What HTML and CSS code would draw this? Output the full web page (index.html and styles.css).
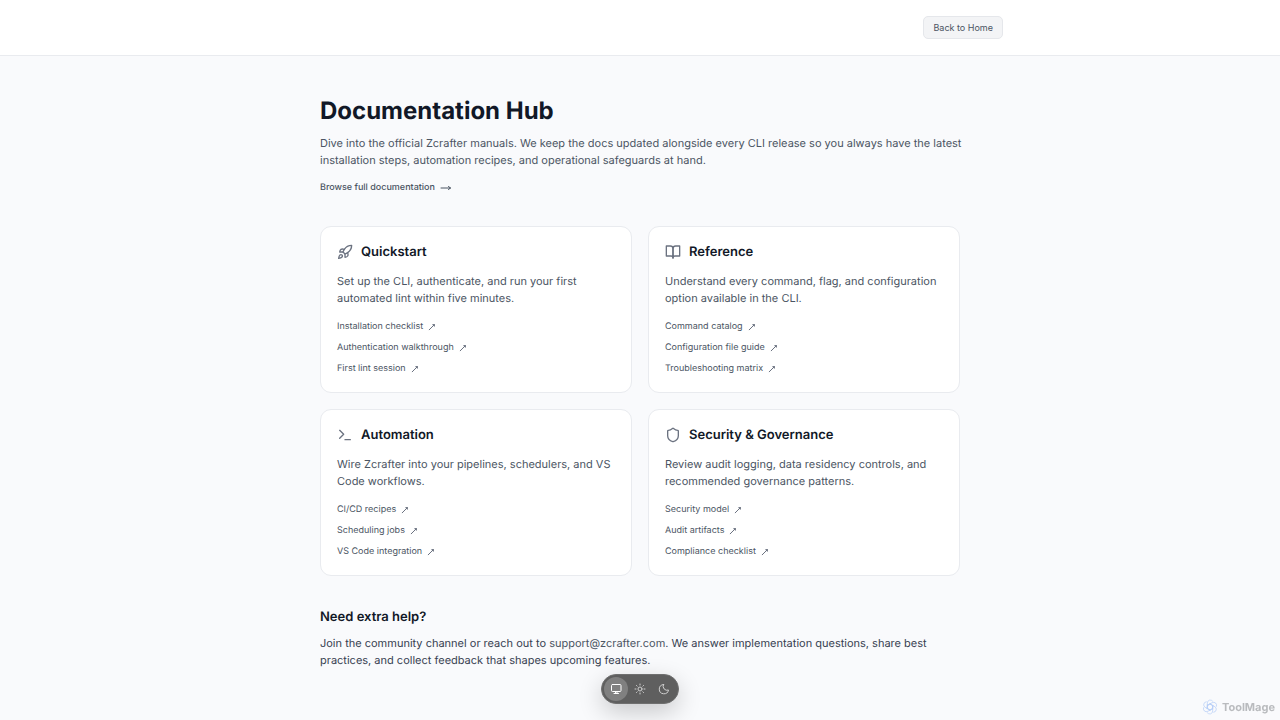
FILE: index.html
```html
<!DOCTYPE html>
<html lang="en">
<head>
  <meta charset="UTF-8" />
  <meta name="viewport" content="width=device-width, initial-scale=1.0" />
  <title>Documentation Hub</title>
  <link rel="stylesheet" href="styles.css">
</head>
<body>

  <header class="site-header">
    <div class="header-inner">
      <button type="button" class="back-button">Back to Home</button>
    </div>
  </header>

  <main class="container">
    <section class="intro">
      <h1>Documentation Hub</h1>
      <p>Dive into the official Zcrafter manuals. We keep the docs updated alongside every CLI release so you always have the latest installation steps, automation recipes, and operational safeguards at hand.</p>
      <a class="browse-link" href="#">Browse full documentation
        <svg class="arrow-right" viewBox="0 0 12 8"><path d="M1 4h9.500M8.500 2.500L10.500 4l-2 1.500" /></svg>
      </a>
    </section>

    <section class="cards">
      <article class="card">
        <h2>
          <svg class="icon" viewBox="0 0 24 24"><path d="M4.500 16.500c-1.500 1.260-2 5-2 5s3.740-.5 5-2c.71-.84.7-2.130-.09-2.910a2.180 2.180 0 0 0-2.910-.09z" /><path d="m12 15-3-3a22 22 0 0 1 2-3.950A12.880 12.880 0 0 1 22 2c0 2.720-.78 7.500-6 11a22.350 22.350 0 0 1-4 2z" /><path d="M9 12H4s.55-3.030 2-4c1.620-1.080 5 0 5 0" /><path d="M12 15v5s3.030-.55 4-2c1.080-1.620 0-5 0-5" /></svg>
          Quickstart
        </h2>
        <p>Set up the CLI, authenticate, and run your first automated lint within five minutes.</p>
        <ul>
          <li><a href="#">Installation checklist <svg class="arrow-out" viewBox="0 0 8 8"><path d="M1.200 6.800L6.400 1.600M4.800 1.600h1.600v1.600" /></svg></a></li>
          <li><a href="#">Authentication walkthrough <svg class="arrow-out" viewBox="0 0 8 8"><path d="M1.200 6.800L6.400 1.600M4.800 1.600h1.600v1.600" /></svg></a></li>
          <li><a href="#">First lint session <svg class="arrow-out" viewBox="0 0 8 8"><path d="M1.200 6.800L6.400 1.600M4.800 1.600h1.600v1.600" /></svg></a></li>
        </ul>
      </article>

      <article class="card">
        <h2>
          <svg class="icon" viewBox="0 0 24 24"><path d="M2 3h6a4 4 0 0 1 4 4v14a3 3 0 0 0-3-3H2z" /><path d="M22 3h-6a4 4 0 0 0-4 4v14a3 3 0 0 1 3-3h7z" /></svg>
          Reference
        </h2>
        <p>Understand every command, flag, and configuration option available in the CLI.</p>
        <ul>
          <li><a href="#">Command catalog <svg class="arrow-out" viewBox="0 0 8 8"><path d="M1.200 6.800L6.400 1.600M4.800 1.600h1.600v1.600" /></svg></a></li>
          <li><a href="#">Configuration file guide <svg class="arrow-out" viewBox="0 0 8 8"><path d="M1.200 6.800L6.400 1.600M4.800 1.600h1.600v1.600" /></svg></a></li>
          <li><a href="#">Troubleshooting matrix <svg class="arrow-out" viewBox="0 0 8 8"><path d="M1.200 6.800L6.400 1.600M4.800 1.600h1.600v1.600" /></svg></a></li>
        </ul>
      </article>

      <article class="card">
        <h2>
          <svg class="icon" viewBox="0 0 24 24"><path d="m4 17 6-6-6-6" /><path d="M12 19h8" /></svg>
          Automation
        </h2>
        <p>Wire Zcrafter into your pipelines, schedulers, and VS Code workflows.</p>
        <ul>
          <li><a href="#">CI/CD recipes <svg class="arrow-out" viewBox="0 0 8 8"><path d="M1.200 6.800L6.400 1.600M4.800 1.600h1.600v1.600" /></svg></a></li>
          <li><a href="#">Scheduling jobs <svg class="arrow-out" viewBox="0 0 8 8"><path d="M1.200 6.800L6.400 1.600M4.800 1.600h1.600v1.600" /></svg></a></li>
          <li><a href="#">VS Code integration <svg class="arrow-out" viewBox="0 0 8 8"><path d="M1.200 6.800L6.400 1.600M4.800 1.600h1.600v1.600" /></svg></a></li>
        </ul>
      </article>

      <article class="card">
        <h2>
          <svg class="icon" viewBox="0 0 24 24"><path d="M20 13c0 5-3.500 7.500-7.660 8.950a1 1 0 0 1-.67-.01C7.500 20.500 4 18 4 13V6a1 1 0 0 1 1-1c2 0 4.500-1.200 6.240-2.720a1.170 1.170 0 0 1 1.520 0C14.510 3.810 17 5 19 5a1 1 0 0 1 1 1z" /></svg>
          Security &amp; Governance
        </h2>
        <p>Review audit logging, data residency controls, and recommended governance patterns.</p>
        <ul>
          <li><a href="#">Security model <svg class="arrow-out" viewBox="0 0 8 8"><path d="M1.200 6.800L6.400 1.600M4.800 1.600h1.600v1.600" /></svg></a></li>
          <li><a href="#">Audit artifacts <svg class="arrow-out" viewBox="0 0 8 8"><path d="M1.200 6.800L6.400 1.600M4.800 1.600h1.600v1.600" /></svg></a></li>
          <li><a href="#">Compliance checklist <svg class="arrow-out" viewBox="0 0 8 8"><path d="M1.200 6.800L6.400 1.600M4.800 1.600h1.600v1.600" /></svg></a></li>
        </ul>
      </article>
    </section>

    <section class="help">
      <h2>Need extra help?</h2>
      <p>Join the community channel or reach out to <a href="mailto:support@zcrafter.com">support@zcrafter.com</a>. We answer implementation questions, share best practices, and collect feedback that shapes upcoming features.</p>
    </section>
  </main>

  <!-- Theme switch -->
  <div class="theme-switch">
    <button type="button" class="active" aria-label="System theme">
      <svg viewBox="0 0 24 24"><rect x="3" y="3" width="19" height="14" rx="2" /><path d="M8 21h9M11 18v3M14 18v3" /></svg>
    </button>
    <button type="button" aria-label="Light theme">
      <svg viewBox="0 0 24 24"><circle cx="12" cy="12" r="4" /><path d="M12 2v2M12 20v2M4.900 4.900l1.400 1.400M17.700 17.700l1.400 1.400M2 12h2M20 12h2M6.300 17.700l-1.400 1.400M19.100 4.900l-1.400 1.400" /></svg>
    </button>
    <button type="button" aria-label="Dark theme">
      <svg viewBox="0 0 24 24"><path d="M11 3a8 8 0 0 0 10 11A9.300 9.300 0 1 1 11 3z" /></svg>
    </button>
  </div>

  <div class="badge">
    <svg viewBox="0 0 24 24">
      <g id="petal"><path d="M8 14V6a4.500 4.500 0 0 1 8-2.800M8 9.700l4-2.300 5 2.900" /></g>
      <use href="#petal" transform="rotate(60 12 12)" />
      <use href="#petal" transform="rotate(120 12 12)" />
      <use href="#petal" transform="rotate(180 12 12)" />
      <use href="#petal" transform="rotate(240 12 12)" />
      <use href="#petal" transform="rotate(300 12 12)" />
    </svg>
    <span>ToolMage</span>
  </div>

</body>
</html>
```
FILE: styles.css
```css
* {
  box-sizing: border-box;
}

body {
  margin: 0;
  background-color: #f9fafc;
  color: #111827;
  font-family: Inter, "Liberation Sans", sans-serif;
  font-size: 11px;
  line-height: 17px;
  text-rendering: geometricPrecision;
}

h1, h2, p, ul {
  margin: 0;
  padding: 0;
}

a {
  color: #4b5563;
  text-decoration: none;
}

svg {
  fill: none;
  stroke: currentColor;
  stroke-width: 2;
  stroke-linecap: round;
  stroke-linejoin: round;
  flex-shrink: 0;
}

.site-header {
  background-color: #fff;
  border-bottom: 1px solid #e9ebef;
}

.header-inner {
  display: flex;
  justify-content: flex-end;
  max-width: 768px;
  margin: 0 auto;
  padding: 16px 21px;
}

.back-button {
  padding: 3px 9px;
  border: 1px solid #e5e7eb;
  border-radius: 5px;
  background-color: #f3f4f6;
  color: #4b5563;
  font-family: inherit;
  font-size: 9px;
  line-height: 15px;
  cursor: pointer;
}

.container {
  max-width: 640px;
  margin: 0 auto;
  padding: 39px 0;
}

.intro h1 {
  margin-bottom: 9px;
  font-size: 24px;
  font-weight: 700;
  line-height: 31px;
}

.intro p, .card p {
  color: #4b5563;
}

.intro p {
  margin-right: -8px;
}

.browse-link {
  display: inline-flex;
  align-items: center;
  gap: 5px;
  margin-top: 10px;
  font-size: 9px;
  font-weight: 500;
}

.arrow-right {
  width: 12px;
  height: 8px;
  stroke-width: 1;
}

.cards {
  display: grid;
  grid-template-columns: repeat(2, 1fr);
  gap: 16px;
  margin-top: 30px;
}

.card {
  padding: 16px 16px 15px;
  border: 1px solid #e9ebef;
  border-radius: 11px;
  background-color: #fff;
}

.card h2 {
  display: flex;
  align-items: center;
  gap: 8px;
  margin-bottom: 12px;
  font-size: 13px;
  font-weight: 600;
  line-height: 18px;
}

.icon {
  width: 16px;
  height: 16px;
  color: #6b7280;
}

.card ul {
  display: flex;
  flex-direction: column;
  gap: 5px;
  margin-top: 12px;
  list-style: none;
}

.card li a {
  display: flex;
  align-items: center;
  gap: 5px;
  font-size: 9px;
  line-height: 16px;
}

.arrow-out {
  width: 8px;
  height: 8px;
  color: #6b7280;
  stroke-width: 1;
}

.help {
  margin-top: 32px;
}

.help h2 {
  margin-bottom: 9px;
  font-size: 13px;
  font-weight: 600;
  line-height: 18px;
}

.help p {
  color: #374151;
}

/* Floating theme switch */
.theme-switch {
  position: fixed;
  bottom: 16px;
  left: 50%;
  display: flex;
  padding: 2px;
  border: 1px solid #6f6f6f;
  border-radius: 15px;
  background-color: #5f5f5f;
  box-shadow: 0 8px 24px rgba(0, 0, 0, 0.2);
  transform: translateX(-50%);
}

.theme-switch button {
  display: flex;
  align-items: center;
  justify-content: center;
  width: 24px;
  height: 24px;
  padding: 0;
  border: none;
  border-radius: 50%;
  background: none;
  color: #cfcfcf;
  cursor: pointer;
}

.theme-switch .active {
  background-color: #808080;
  color: #fff;
}

.theme-switch svg {
  width: 12px;
  height: 12px;
}

.badge {
  position: fixed;
  right: 5px;
  bottom: 5px;
  display: flex;
  align-items: center;
  gap: 4px;
  color: #b9bbbe;
  font-size: 11px;
  font-weight: 700;
  line-height: 16px;
}

.badge svg {
  width: 16px;
  height: 16px;
  color: #b5cdf7;
  stroke-width: 1;
}
```
